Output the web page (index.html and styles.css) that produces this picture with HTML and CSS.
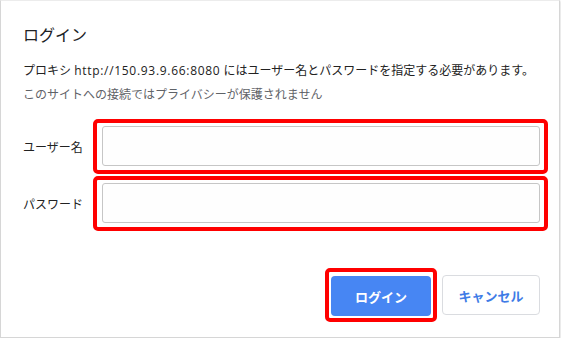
FILE: index.html
```html
<!DOCTYPE html>
<html lang="ja">
<head>
    <meta charset="UTF-8">
    <title>ログイン</title>
    <link rel="stylesheet" href="styles.css">
</head>
<body>
    <div class="auth-dialog">
        <h1 class="auth-title">ログイン</h1>
        <p class="auth-message">プロキシ <span class="url">http://150.93.9.66:8080</span> にはユーザー名とパスワードを指定する必要があります。</p>
        <p class="auth-note">このサイトへの接続ではプライバシーが保護されません</p>

        <div class="auth-fields">
            <label class="field-row">
                <span class="field-label">ユーザー名</span>
                <span class="mark">
                    <input class="field-input" type="text">
                </span>
            </label>
            <label class="field-row">
                <span class="field-label">パスワード</span>
                <span class="mark">
                    <input class="field-input" type="password">
                </span>
            </label>
        </div>

        <div class="auth-actions">
            <span class="mark mark-btn">
                <button class="btn btn-primary">ログイン</button>
            </span>
            <button class="btn btn-cancel">キャンセル</button>
        </div>
    </div>
</body>
</html>
```

FILE: styles.css
```css
:root {
    --text-main: #202124;
    --text-muted: #5f6368;
    --accent: #4786f3;
    --accent-text: #3e7be6;
    --mark-red: #ff0000;
    --input-border: #c6c6c6;
}

body {
    margin: 0;
    background: #fff;
    font-family: "Open Sans", "Noto Sans CJK JP", sans-serif;
    color: var(--text-main);
}

.auth-dialog {
    box-sizing: border-box;
    width: 560px;
    height: 338px;
    padding: 24px 19px 0 22px;
    background: #fff;
    border: 1px solid #d6d6d6;
    border-top-color: #ececec;
    box-shadow: 0 1px 2px rgba(0, 0, 0, 0.25);
    display: flex;
    flex-direction: column;
}

.auth-title {
    margin: 0;
    font-size: 16px;
    font-weight: normal;
    line-height: 20px;
}

.auth-message,
.auth-note {
    margin: 0;
    font-size: 12px;
    line-height: 24px;
    white-space: nowrap;
}

.auth-message {
    margin-top: 14px;
    color: #222;
}

.auth-message .url {
    letter-spacing: 0.7px;
    word-spacing: 2px;
}

.auth-note {
    color: var(--text-muted);
}

.auth-fields {
    margin: 12px -8px 0 0;
    display: flex;
    flex-direction: column;
    gap: 2px;
}

.field-row {
    display: flex;
    align-items: center;
}

.field-label {
    width: 70px;
    font-size: 12px;
    color: #222;
}

/* red annotation frames */
.mark {
    display: block;
    flex: 1;
    border: 4px solid var(--mark-red);
    border-radius: 5px;
    padding: 3px 4px 4px 5px;
}

.field-input {
    display: block;
    box-sizing: border-box;
    width: 100%;
    height: 40px;
    margin: 0;
    border: 1px solid var(--input-border);
    border-radius: 3px;
    background: #fefefe;
    outline: none;
}

.auth-actions {
    margin-top: 37px;
    display: flex;
    justify-content: flex-end;
    align-items: center;
    gap: 5px;
}

.mark-btn {
    flex: none;
    padding: 4px 2px 2px 2px;
}

.btn {
    box-sizing: border-box;
    height: 40px;
    border-radius: 4px;
    font-family: "Noto Sans CJK JP", sans-serif;
    font-size: 13px;
    font-weight: bold;
    cursor: pointer;
}

.btn-primary {
    display: block;
    width: 100px;
    border: none;
    background: var(--accent);
    color: #fff;
}

.btn-cancel {
    width: 98px;
    border: 1px solid #dadce0;
    background: #fff;
    color: var(--accent-text);
}
```
